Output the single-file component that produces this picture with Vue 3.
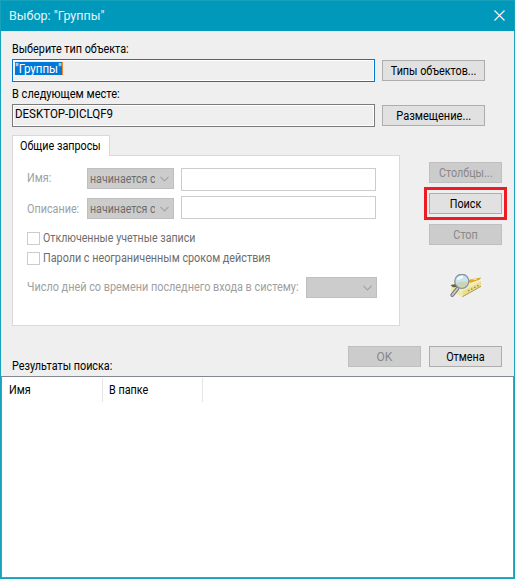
<script setup>
const conditions = [
  { key: 'name', label: 'Имя:', mode: 'начинается с' },
  { key: 'desc', label: 'Описание:', mode: 'начинается с' },
]
const flags = [
  { key: 'disabled', label: 'Отключенные учетные записи' },
  { key: 'password', label: 'Пароли с неограниченным сроком действия' },
]
</script>

<template>
  <div class="window">
    <header class="titlebar">
      <span class="title">Выбор: "Группы"</span>
      <svg class="close" width="11" height="11" viewBox="0 0 11 11">
        <path d="M0.5 0.5L10.5 10.5M10.5 0.5L0.5 10.5" />
      </svg>
    </header>

    <section class="scope">
      <div class="caption"><span class="n">Выберите тип объекта:</span></div>
      <div class="scope-row">
        <div class="field focused"><span class="selected">"Группы"</span></div>
        <button class="btn"><span class="n">Типы объектов...</span></button>
      </div>
      <div class="caption second"><span class="n wide">В следующем месте:</span></div>
      <div class="scope-row">
        <div class="field"><span class="n value">DESKTOP-DICLQF9</span></div>
        <button class="btn"><span class="n wide">Размещение...</span></button>
      </div>
    </section>

    <section class="query">
      <div class="tabs">
        <div class="tab"><span class="n">Общие запросы</span></div>
        <div class="panel">
          <div v-for="c in conditions" :key="c.key" class="condition" :class="c.key">
            <span class="dim"><span class="n">{{ c.label }}</span></span>
            <div class="combo">
              <span class="combo-text"><span class="n tight">{{ c.mode }}</span></span>
              <svg width="9" height="6" viewBox="0 0 9 6"><path d="M0.5 0.8L4.5 4.8L8.5 0.8" /></svg>
            </div>
            <div class="input"></div>
          </div>
          <div class="flags">
            <div v-for="f in flags" :key="f.key" class="flag">
              <i class="box"></i><span class="n" :class="{ tight: f.key === 'disabled' }">{{ f.label }}</span>
            </div>
          </div>
          <div class="days">
            <span class="dim"><span class="n long">Число дней со времени последнего входа в систему:</span></span>
            <div class="combo">
              <svg width="9" height="6" viewBox="0 0 9 6"><path d="M0.5 0.8L4.5 4.8L8.5 0.8" /></svg>
            </div>
          </div>
        </div>
      </div>
      <aside class="actions">
        <button class="btn off"><span class="n">Столбцы...</span></button>
        <div class="highlight"><button class="btn"><span class="n">Поиск</span></button></div>
        <button class="btn off"><span class="n">Стоп</span></button>
        <svg class="search-icon" width="32" height="26" viewBox="0 0 32 26">
          <path d="M1 12L20 4.5L31 7.5L12.5 17Z" fill="#f5eeb4" />
          <path d="M18 6L28 4L31 3.5L30 5.5L20 9Z" fill="#e0a92c" />
          <path d="M22 5.5L27 4.5L26 6Z" fill="#fff0a0" />
          <path d="M0.5 11L6 10L9 12.5L3 13.5Z" fill="#656035" />
          <path d="M12.5 17L31 7.5V12.5L12.5 23Z" fill="#e9de8e" />
          <path d="M1 12.5L12.5 17V23L1 17.5Z" fill="#f3eaa4" />
          <path d="M12.5 22.7L31 12.3" stroke="#a99c54" />
          <path d="M18 17L29.5 11" stroke="#8b8045" stroke-width="1.2" stroke-dasharray="1.5 2" />
          <path d="M7.5 14.5L2.3 21" stroke="#73777c" stroke-width="3.8" stroke-linecap="round" />
          <path d="M7.5 14.5L2.3 21" stroke="#c5cbd0" stroke-width="1.8" stroke-linecap="round" />
          <circle cx="11.8" cy="7.3" r="7" fill="#c9e3f0" stroke="#82919c" stroke-width="1.3" />
          <path d="M6 9.5Q12 6.5 18 8Q16.5 13 11.8 13Q7.5 13 6 9.5Z" fill="#cbd5b0" />
          <path d="M7.5 5.5Q9.5 3 13 3" fill="none" stroke="#f4fbff" stroke-width="2.4" />
        </svg>
      </aside>
    </section>

    <section class="confirm">
      <span class="results-label"><span class="n">Результаты поиска:</span></span>
      <div class="confirm-buttons">
        <button class="btn off"><span>OK</span></button>
        <button class="btn"><span class="n">Отмена</span></button>
      </div>
    </section>

    <section class="results">
      <div class="columns">
        <span class="col first"><span class="n">Имя</span></span>
        <span class="col"><span class="n">В папке</span></span>
      </div>
    </section>
  </div>
</template>

<style>
body { margin: 0; }
</style>

<style scoped>
* { box-sizing: border-box; }
.window {
  width: 515px;
  height: 579px;
  display: flex;
  flex-direction: column;
  background: #efefef;
  border: 1px solid #16a1bd;
  font: 12px/16px Roboto, "Liberation Sans", sans-serif;
  color: #000;
  white-space: nowrap;
}
/* Narrow dialog face */
.n { display: inline-block; transform: scaleX(0.9); transform-origin: left center; }
.n.wide { transform: scaleX(0.92); }
.n.long { transform: scaleX(0.906); }
.n.tight { transform: scaleX(0.885); }
.n.value { transform: scaleX(0.96); }
.btn .n { transform-origin: center; }
.titlebar {
  height: 30px;
  flex: none;
  display: flex;
  align-items: center;
  justify-content: space-between;
  padding: 0 9px 1px 8px;
  background: #0099bc;
  color: #e4f5f9;
}
.title { font-size: 12.5px; }
.close path { stroke: #fff; stroke-width: 1.1; }
.scope { padding: 10px 0 0 11px; }
.caption { height: 16px; margin-bottom: 2px; }
.caption.second { margin: 4px 0 2px; }
.scope-row { display: flex; align-items: center; gap: 7px; }
.field {
  width: 363px;
  height: 23px;
  padding: 1px 2px;
  border: 1px solid #7a7a7a;
  box-shadow: inset 0 0 0 1px #fff;
  display: flex;
  align-items: flex-start;
}
.focused { border-color: #0078d7; }
.selected {
  height: 13px;
  margin-top: 1px;
  line-height: 14px;
  background: #0078d7;
  color: #fff;
  border-right: 1px solid #ff8728;
  transform: scaleX(0.96);
  transform-origin: left center;
}
.btn {
  width: 73px;
  height: 21px;
  flex: none;
  padding: 0;
  border: 1px solid #adadad;
  border-radius: 0;
  background: #e1e1e1;
  font: inherit;
  color: #000;
  display: flex;
  align-items: center;
  justify-content: center;
}
.scope .btn { width: 103px; }
.btn.off { background: #ccc; border-color: #bfbfbf; color: #888; }
.query { display: flex; padding: 8px 0 0 11px; }
.tabs { width: 388px; }
.tab {
  width: 98px;
  height: 21px;
  padding: 2px 0 0 7px;
  border: 1px solid #d9d9d9;
  border-bottom: 0;
  background: #fff;
  position: relative;
  z-index: 1;
}
.panel {
  height: 171px;
  margin-top: -1px;
  padding: 12px 0 0 14px;
  border: 1px solid #d9d9d9;
  background: #fff;
}
.condition { display: grid; grid-template-columns: 60px 87px 202px; align-items: start; height: 23px; }
.condition .input { margin-left: 7px; width: 195px; }
.condition.desc { margin-top: 5px; }
.condition.desc .combo { margin-top: 2px; }
.dim { color: #a0a0a0; padding-top: 2px; }
.condition.desc .dim { padding-top: 5px; }
.input { height: 23px; border: 1px solid #ccc; background: #fff; }
.combo {
  height: 21px;
  padding: 0 4px 0 2px;
  display: flex;
  align-items: center;
  justify-content: flex-end;
  border: 1px solid #bfbfbf;
  background: #ccc;
  color: #6d6d6d;
}
.combo svg { flex: none; }
.combo path { fill: none; stroke: #a3a3a3; stroke-width: 1.2; }
.combo-text { width: 65px; overflow: hidden; margin-right: auto; }
.flags { padding-top: 9px; color: #6d6d6d; }
.flag { display: flex; align-items: center; height: 20px; gap: 3px; }
.box { width: 13px; height: 13px; border: 1px solid #ccc; }
.days { display: flex; width: 350px; padding-top: 9px; }
.days .dim { width: 279px; }
.days .combo { width: 71px; }
.actions { width: 83px; margin-left: 24px; padding-top: 27px; display: flex; flex-direction: column; align-items: center; }
.highlight { padding: 3px 2px; border: 3px solid #ed1c24; margin: 4px 0; }
.search-icon { margin-top: 29px; }
.confirm { display: flex; justify-content: space-between; height: 50px; padding: 20px 12px 0 11px; }
.results-label { padding-top: 12px; }
.confirm-buttons { display: flex; gap: 8px; }
.results { flex: 1; border: 1px solid #828790; background: #fff; }
.columns { display: flex; padding-top: 1px; }
.col { width: 100px; height: 24px; padding: 4px 0 0 6px; border-right: 1px solid #e5e5e5; }
.col.first { width: 101px; padding-left: 7px; }
</style>
